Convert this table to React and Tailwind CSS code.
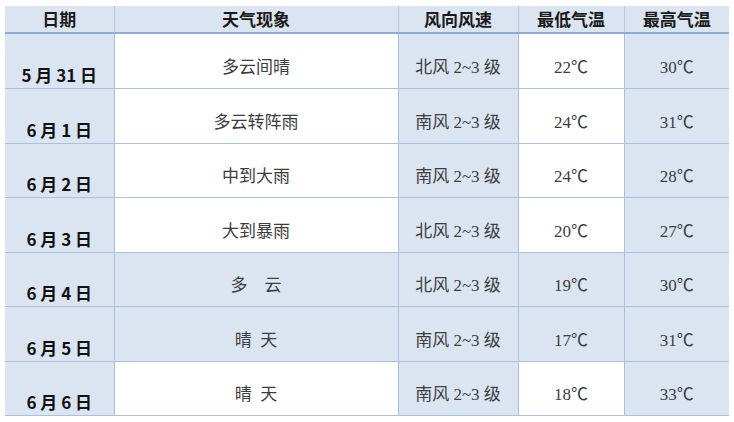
const rows = [
  { date: '5 月 31 日', weather: '多云间晴', wind: '北风 2~3 级', low: '22℃', high: '30℃', shaded: false },
  { date: '6 月 1 日', weather: '多云转阵雨', wind: '南风 2~3 级', low: '24℃', high: '31℃', shaded: false },
  { date: '6 月 2 日', weather: '中到大雨', wind: '南风 2~3 级', low: '24℃', high: '28℃', shaded: false },
  { date: '6 月 3 日', weather: '大到暴雨', wind: '北风 2~3 级', low: '20℃', high: '27℃', shaded: false },
  { date: '6 月 4 日', weather: '多\u3000云', wind: '北风 2~3 级', low: '19℃', high: '30℃', shaded: true },
  { date: '6 月 5 日', weather: '晴\u2002天', wind: '南风 2~3 级', low: '17℃', high: '31℃', shaded: true },
  { date: '6 月 6 日', weather: '晴\u2002天', wind: '南风 2~3 级', low: '18℃', high: '33℃', shaded: false },
]

const headers = ['日期', '天气现象', '风向风速', '最低气温', '最高气温']

const serif = { fontFamily: '"Liberation Serif", "Noto Sans CJK SC", serif' }
const sans = { fontFamily: '"Noto Sans CJK SC", sans-serif' }

export default function App() {
  return (
    <div className="w-[734px] h-[422px] bg-white pl-[5px] pt-[6px]">
      <table className="table-fixed border-collapse w-[724px]">
        <colgroup>
          <col className="w-[109px]" />
          <col className="w-[284px]" />
          <col className="w-[120px]" />
          <col className="w-[106px]" />
          <col className="w-[105px]" />
        </colgroup>
        <thead>
          <tr className="h-[27px] bg-[#dbe5f1] border-b-2 border-[#8eaad6]">
            {headers.map((h, i) => (
              <th
                key={h}
                className={`p-0 text-center align-middle text-[17px] font-bold text-[#1a1a1a] ${i < 4 ? 'border-r border-[#b4c7e0]' : ''}`}
                style={sans}
              >
                {h}
              </th>
            ))}
          </tr>
        </thead>
        <tbody>
          {rows.map((r, idx) => (
            <tr key={r.date} className={`${idx === 0 ? 'h-[55.5px]' : 'h-[54.5px]'} border-b border-[#a9c0de]`}>
              <td
                className="p-0 bg-[#dbe5f1] border-r border-[#a9c0de] text-center align-bottom text-[17px] leading-[26px] font-bold text-[#111] whitespace-pre"
                style={sans}
              >
                {r.date}
              </td>
              <td
                className={`p-0 pt-[13px] border-r border-[#a9c0de] text-center align-middle text-[17px] text-[#3d3d3d] ${r.shaded ? 'bg-[#dbe5f1]' : 'bg-white'}`}
                style={serif}
              >
                {r.weather}
              </td>
              <td
                className="p-0 pt-[13px] bg-[#dbe5f1] border-r border-[#a9c0de] text-center align-middle text-[17px] text-[#3d3d3d]"
                style={serif}
              >
                {r.wind}
              </td>
              <td
                className={`p-0 pt-[13px] border-r border-[#a9c0de] text-center align-middle text-[17px] text-[#3d3d3d] ${r.shaded ? 'bg-[#dbe5f1]' : 'bg-white'}`}
                style={serif}
              >
                {r.low}
              </td>
              <td
                className="p-0 pt-[13px] bg-[#dbe5f1] text-center align-middle text-[17px] text-[#3d3d3d]"
                style={serif}
              >
                {r.high}
              </td>
            </tr>
          ))}
        </tbody>
      </table>
    </div>
  )
}
